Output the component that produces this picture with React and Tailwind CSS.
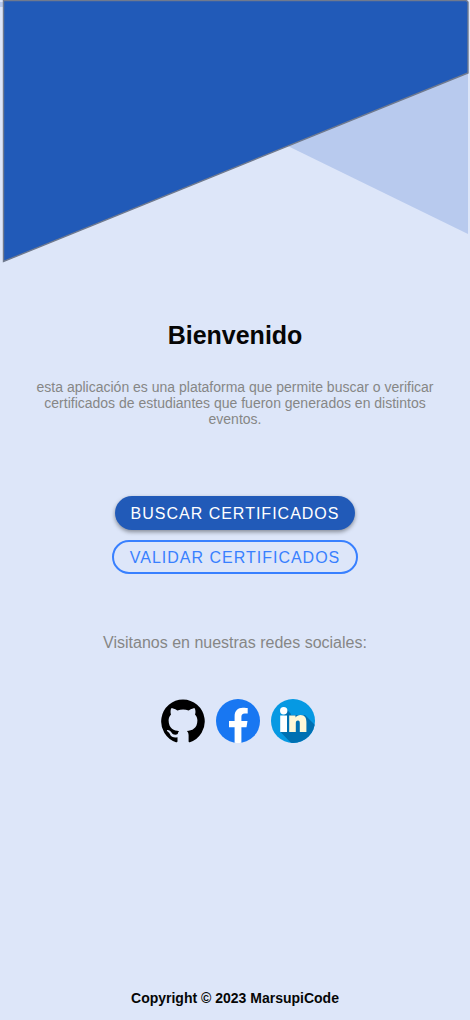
import React from "react";

function HeaderArt() {
  return (
    <svg viewBox="0 0 470 264" className="block w-full" aria-hidden="true">
      <rect x="0" y="2" width="3" height="5" fill="#b8caee" />
      <polygon points="3,7 468,0 468,234" fill="#b8caee" />
      <polygon
        points="3.5,0.5 466,0.5 468,2 468,73 3.5,261.5"
        fill="#215ab8"
        stroke="#707a8e"
        strokeWidth="1.4"
      />
    </svg>
  );
}

function GithubIcon() {
  return (
    <svg viewBox="0 0 44 44" className="size-11" aria-hidden="true">
      <path
        fill="#000"
        d="M22 .5A22 22 0 0 0 15 43.300C16.100 43.500 16.500 42.800 16.500 42.300V38.200C10.400 39.500 9.100 35.600 9.100 35.600C8.100 33 6.700 32.400 6.700 32.400C4.700 31 6.900 31 6.900 31C9.100 31.200 10.300 33.300 10.300 33.300C12.200 36.600 15.400 35.700 16.700 35.100C16.900 33.700 17.500 32.700 18.100 32.200C13.200 31.600 7.600 29.700 7.600 21.300C7.600 18.900 8.700 16.900 10 15.400C9.800 14.900 9 12.400 10.200 9.200C10.200 9.200 12.200 8.600 16.400 11.400A21 21 0 0 1 27.700 11.400C31.900 8.600 33.800 9.200 33.800 9.200C35 12.400 34.300 14.900 34 15.400C35.400 16.900 36.400 18.900 36.400 21.300C36.400 29.700 30.900 31.600 25.900 32.100C26.700 32.800 27.600 34.200 27.600 36.300V42.300C27.600 42.900 28 43.500 28.900 43.300A22 22 0 0 0 22 .5Z"
      />
    </svg>
  );
}

function FacebookIcon() {
  return (
    <svg viewBox="0 0 44 44" className="size-11" aria-hidden="true">
      <circle cx="22" cy="22" r="22" fill="#1877f2" />
      <path
        fill="#fff"
        d="M30.500 28.300L31.500 22H25.400V17.800C25.400 16.100 26.200 14.500 28.900 14.500H31.700V9.100S29.200 8.700 26.800 8.700C21.800 8.700 18.600 11.700 18.600 17.200V22H13V28.300H18.600V43.700Q22 44.300 25.400 43.700V28.300Z"
      />
    </svg>
  );
}

function LinkedinIcon() {
  return (
    <svg viewBox="0 0 44 44" className="size-11" aria-hidden="true">
      <clipPath id="linkedin-disc">
        <circle cx="22" cy="22" r="22" />
      </clipPath>
      <circle cx="22" cy="22" r="22" fill="#0699e3" />
      <path
        clipPath="url(#linkedin-disc)"
        fill="#0070b2"
        d="M15 9.500L20 15V16L34 16L46 28V46H22L9.500 33Z"
      />
      <circle cx="12.700" cy="11.700" r="3.700" fill="#fff" />
      <path fill="#fff" d="M9.200 16.500H16V33H9.200Z" />
      <path
        fill="#fff7d6"
        d="M18.200 16.500H24.500V18.600C25.500 17 27.300 15.900 29.500 15.900C34 15.900 35.400 19 35.400 23V33H28.800V24.500C28.800 22.500 28.500 21.400 27 21.400C25.300 21.400 24.800 22.500 24.800 24.500V33H18.200Z"
      />
    </svg>
  );
}

export default function App() {
  return (
    <div className="flex min-h-screen flex-col bg-[#dde6f9] text-center font-['Liberation_Sans',Arial,sans-serif]">
      <HeaderArt />
      <main className="flex grow flex-col items-center px-5">
        <h1 className="mt-14 text-[25px] leading-[30px] font-bold text-[#060606]">Bienvenido</h1>
        <p className="mt-[29px] text-sm leading-4 text-[#868686]">
          esta aplicación es una plataforma que permite buscar o verificar certificados de
          estudiantes que fueron generados en distintos eventos.
        </p>
        <div className="mt-[69px] flex flex-col items-center gap-2.5">
          <button
            type="button"
            className="h-[34px] rounded-full bg-[#215ab8] px-4 pt-0.5 text-base tracking-[1px] text-white uppercase shadow-[0_2px_4px_rgba(0,0,0,0.4)]"
          >
            Buscar certificados
          </button>
          <button
            type="button"
            className="h-[34px] rounded-full border-2 border-[#3880ff] px-4 pt-0.5 text-base tracking-[1px] text-[#3880ff] uppercase"
          >
            Validar certificados
          </button>
        </div>
        <p className="mt-[57px] text-base leading-6 text-[#868686]">
          Visitanos en nuestras redes sociales:
        </p>
        <nav className="mt-11 ml-1.5 flex gap-[11px]" aria-label="Redes sociales">
          <a href="#github" aria-label="GitHub"><GithubIcon /></a>
          <a href="#facebook" aria-label="Facebook"><FacebookIcon /></a>
          <a href="#linkedin" aria-label="LinkedIn"><LinkedinIcon /></a>
        </nav>
      </main>
      <footer className="pb-3.5 text-sm leading-4 font-bold text-[#060606]">
        Copyright © 2023 MarsupiCode
      </footer>
    </div>
  );
}
